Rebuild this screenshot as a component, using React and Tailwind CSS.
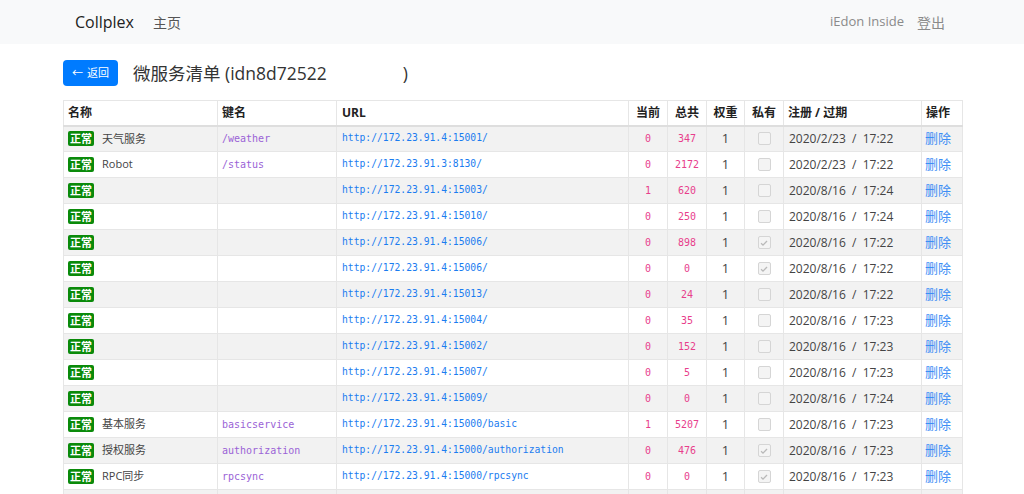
import React from "react";

const ROWS = [
  { name: "天气服务", key: "/weather", url: "http://172.23.91.4:15001/", cur: 0, total: 347, priv: false, date: "2020/2/23", time: "17:22" },
  { name: "Robot", key: "/status", url: "http://172.23.91.3:8130/", cur: 0, total: 2172, priv: false, date: "2020/2/23", time: "17:22" },
  { name: "", key: "", url: "http://172.23.91.4:15003/", cur: 1, total: 620, priv: false, date: "2020/8/16", time: "17:24" },
  { name: "", key: "", url: "http://172.23.91.4:15010/", cur: 0, total: 250, priv: false, date: "2020/8/16", time: "17:24" },
  { name: "", key: "", url: "http://172.23.91.4:15006/", cur: 0, total: 898, priv: true, date: "2020/8/16", time: "17:22" },
  { name: "", key: "", url: "http://172.23.91.4:15006/", cur: 0, total: 0, priv: true, date: "2020/8/16", time: "17:22" },
  { name: "", key: "", url: "http://172.23.91.4:15013/", cur: 0, total: 24, priv: false, date: "2020/8/16", time: "17:22" },
  { name: "", key: "", url: "http://172.23.91.4:15004/", cur: 0, total: 35, priv: false, date: "2020/8/16", time: "17:23" },
  { name: "", key: "", url: "http://172.23.91.4:15002/", cur: 0, total: 152, priv: false, date: "2020/8/16", time: "17:23" },
  { name: "", key: "", url: "http://172.23.91.4:15007/", cur: 0, total: 5, priv: false, date: "2020/8/16", time: "17:23" },
  { name: "", key: "", url: "http://172.23.91.4:15009/", cur: 0, total: 0, priv: false, date: "2020/8/16", time: "17:24" },
  { name: "基本服务", key: "basicservice", url: "http://172.23.91.4:15000/basic", cur: 1, total: 5207, priv: false, date: "2020/8/16", time: "17:23" },
  { name: "授权服务", key: "authorization", url: "http://172.23.91.4:15000/authorization", cur: 0, total: 476, priv: true, date: "2020/8/16", time: "17:23" },
  { name: "RPC同步", key: "rpcsync", url: "http://172.23.91.4:15000/rpcsync", cur: 0, total: 0, priv: true, date: "2020/8/16", time: "17:23" },
  { name: "", key: "", url: "", cur: "", total: "", priv: null, date: "", time: "" },
];

const sans = "font-['Open_Sans','Noto_Sans_CJK_SC',sans-serif]";
const mono = "font-['DejaVu_Sans_Mono',monospace]";

function Checkbox({ checked }) {
  return (
    <span className="inline-flex w-[13px] h-[13px] items-center justify-center rounded-[2px] border border-[#d5d5d5] bg-[#f4f4f4] align-middle">
      {checked && (
        <svg viewBox="0 0 12 12" className="w-[10px] h-[10px]">
          <path d="M2.5 6.3l2.3 2.3 4.8-5" fill="none" stroke="#b9b9b9" strokeWidth="1.6" />
        </svg>
      )}
    </span>
  );
}

export default function App() {
  return (
    <div className={`min-h-screen bg-white text-[#212529] ${sans}`}>
      {/* Navbar */}
      <nav className="h-[44px] bg-[#f8f9fa] flex items-center">
        <div className="w-[870px] ml-[75px] flex items-center">
          <span className="text-[16px] text-[#222] mr-[19px]">Collplex</span>
          <span className="text-[14px] text-[#555]">主页</span>
          <div className="ml-auto flex items-center gap-[13px] text-[#8a8a8a]">
            <span className="text-[13px]">iEdon Inside</span>
            <span className="text-[14px]">登出</span>
          </div>
        </div>
      </nav>

      <section className="pl-[63px] pr-[62px]">
        {/* Header */}
        <div className="flex items-center h-[56px] pt-[2px]">
          <button className="h-[26px] w-[55px] rounded-[4px] bg-[#007bff] text-white text-[11px] flex items-center justify-center gap-[4px]">
            <span>←</span>
            <span>返回</span>
          </button>
          <h1 className="ml-[15px] text-[17.5px] text-[#333] whitespace-pre">
            微服务清单 (idn8d72522<span className="inline-block w-[76px]"></span>)
          </h1>
        </div>

        {/* Table */}
        <table className="w-[899px] table-fixed border-collapse text-[12px]">
          <colgroup>
            <col className="w-[154px]" />
            <col className="w-[119px]" />
            <col className="w-[292px]" />
            <col className="w-[39px]" />
            <col className="w-[39px]" />
            <col className="w-[38px]" />
            <col className="w-[39px]" />
            <col className="w-[138px]" />
            <col className="w-[41px]" />
          </colgroup>
          <thead>
            <tr className="h-[25px] font-bold text-[12px] text-[#222]">
              <th className="border border-[#e6e6e6] border-b-2 border-b-[#dedede] px-[4px] text-left">名称</th>
              <th className="border border-[#e6e6e6] border-b-2 border-b-[#dedede] px-[4px] text-left">键名</th>
              <th className="border border-[#e6e6e6] border-b-2 border-b-[#dedede] px-[5px] text-left">URL</th>
              <th className="border border-[#e6e6e6] border-b-2 border-b-[#dedede] px-0 text-center">当前</th>
              <th className="border border-[#e6e6e6] border-b-2 border-b-[#dedede] px-0 text-center">总共</th>
              <th className="border border-[#e6e6e6] border-b-2 border-b-[#dedede] px-0 text-center">权重</th>
              <th className="border border-[#e6e6e6] border-b-2 border-b-[#dedede] px-0 text-center">私有</th>
              <th className="border border-[#e6e6e6] border-b-2 border-b-[#dedede] px-[4px] text-left">注册 / 过期</th>
              <th className="border border-[#e6e6e6] border-b-2 border-b-[#dedede] px-[4px] text-left">操作</th>
            </tr>
          </thead>
          <tbody>
            {ROWS.map((r, i) => (
              <tr key={i} className={`h-[26px] ${i % 2 === 0 ? "bg-[#f2f2f2]" : "bg-white"}`}>
                <td className="border border-[#e6e6e6] px-[4px]">
                  {r.priv !== null && (
                    <div className="flex items-center">
                      <span className="inline-flex items-center h-[15px] px-[2px] rounded-[2px] bg-[#0a8a0a] text-white text-[11px] font-bold leading-none font-['Noto_Sans_CJK_SC',serif]">
                        正常
                      </span>
                      {r.name && <span className="ml-[8px] text-[11px] text-[#444]">{r.name}</span>}
                    </div>
                  )}
                </td>
                <td className={`border border-[#e6e6e6] px-[4px] text-[10px] text-[#9a63d6] ${mono}`}>{r.key}</td>
                <td className={`border border-[#e6e6e6] px-[5px] text-[9.7px] text-[#1a7cf0] ${mono}`}>{r.url}</td>
                <td className={`border border-[#e6e6e6] text-center text-[10px] text-[#e83e8c] ${mono}`}>{r.cur}</td>
                <td className={`border border-[#e6e6e6] text-center text-[10px] text-[#e83e8c] ${mono}`}>{r.total}</td>
                <td className="border border-[#e6e6e6] text-center text-[13px] text-[#444]">{r.priv !== null ? 1 : ""}</td>
                <td className="border border-[#e6e6e6] text-center leading-none">
                  {r.priv !== null && <Checkbox checked={r.priv} />}
                </td>
                <td className="border border-[#e6e6e6] px-[5px] text-[12px] text-[#444] whitespace-pre">
                  {r.date && `${r.date}  /  ${r.time}`}
                </td>
                <td className="border border-[#e6e6e6] px-[3px] text-[13px] text-[#3d8ef5]">{r.date && "删除"}</td>
              </tr>
            ))}
          </tbody>
        </table>
      </section>
    </div>
  );
}
